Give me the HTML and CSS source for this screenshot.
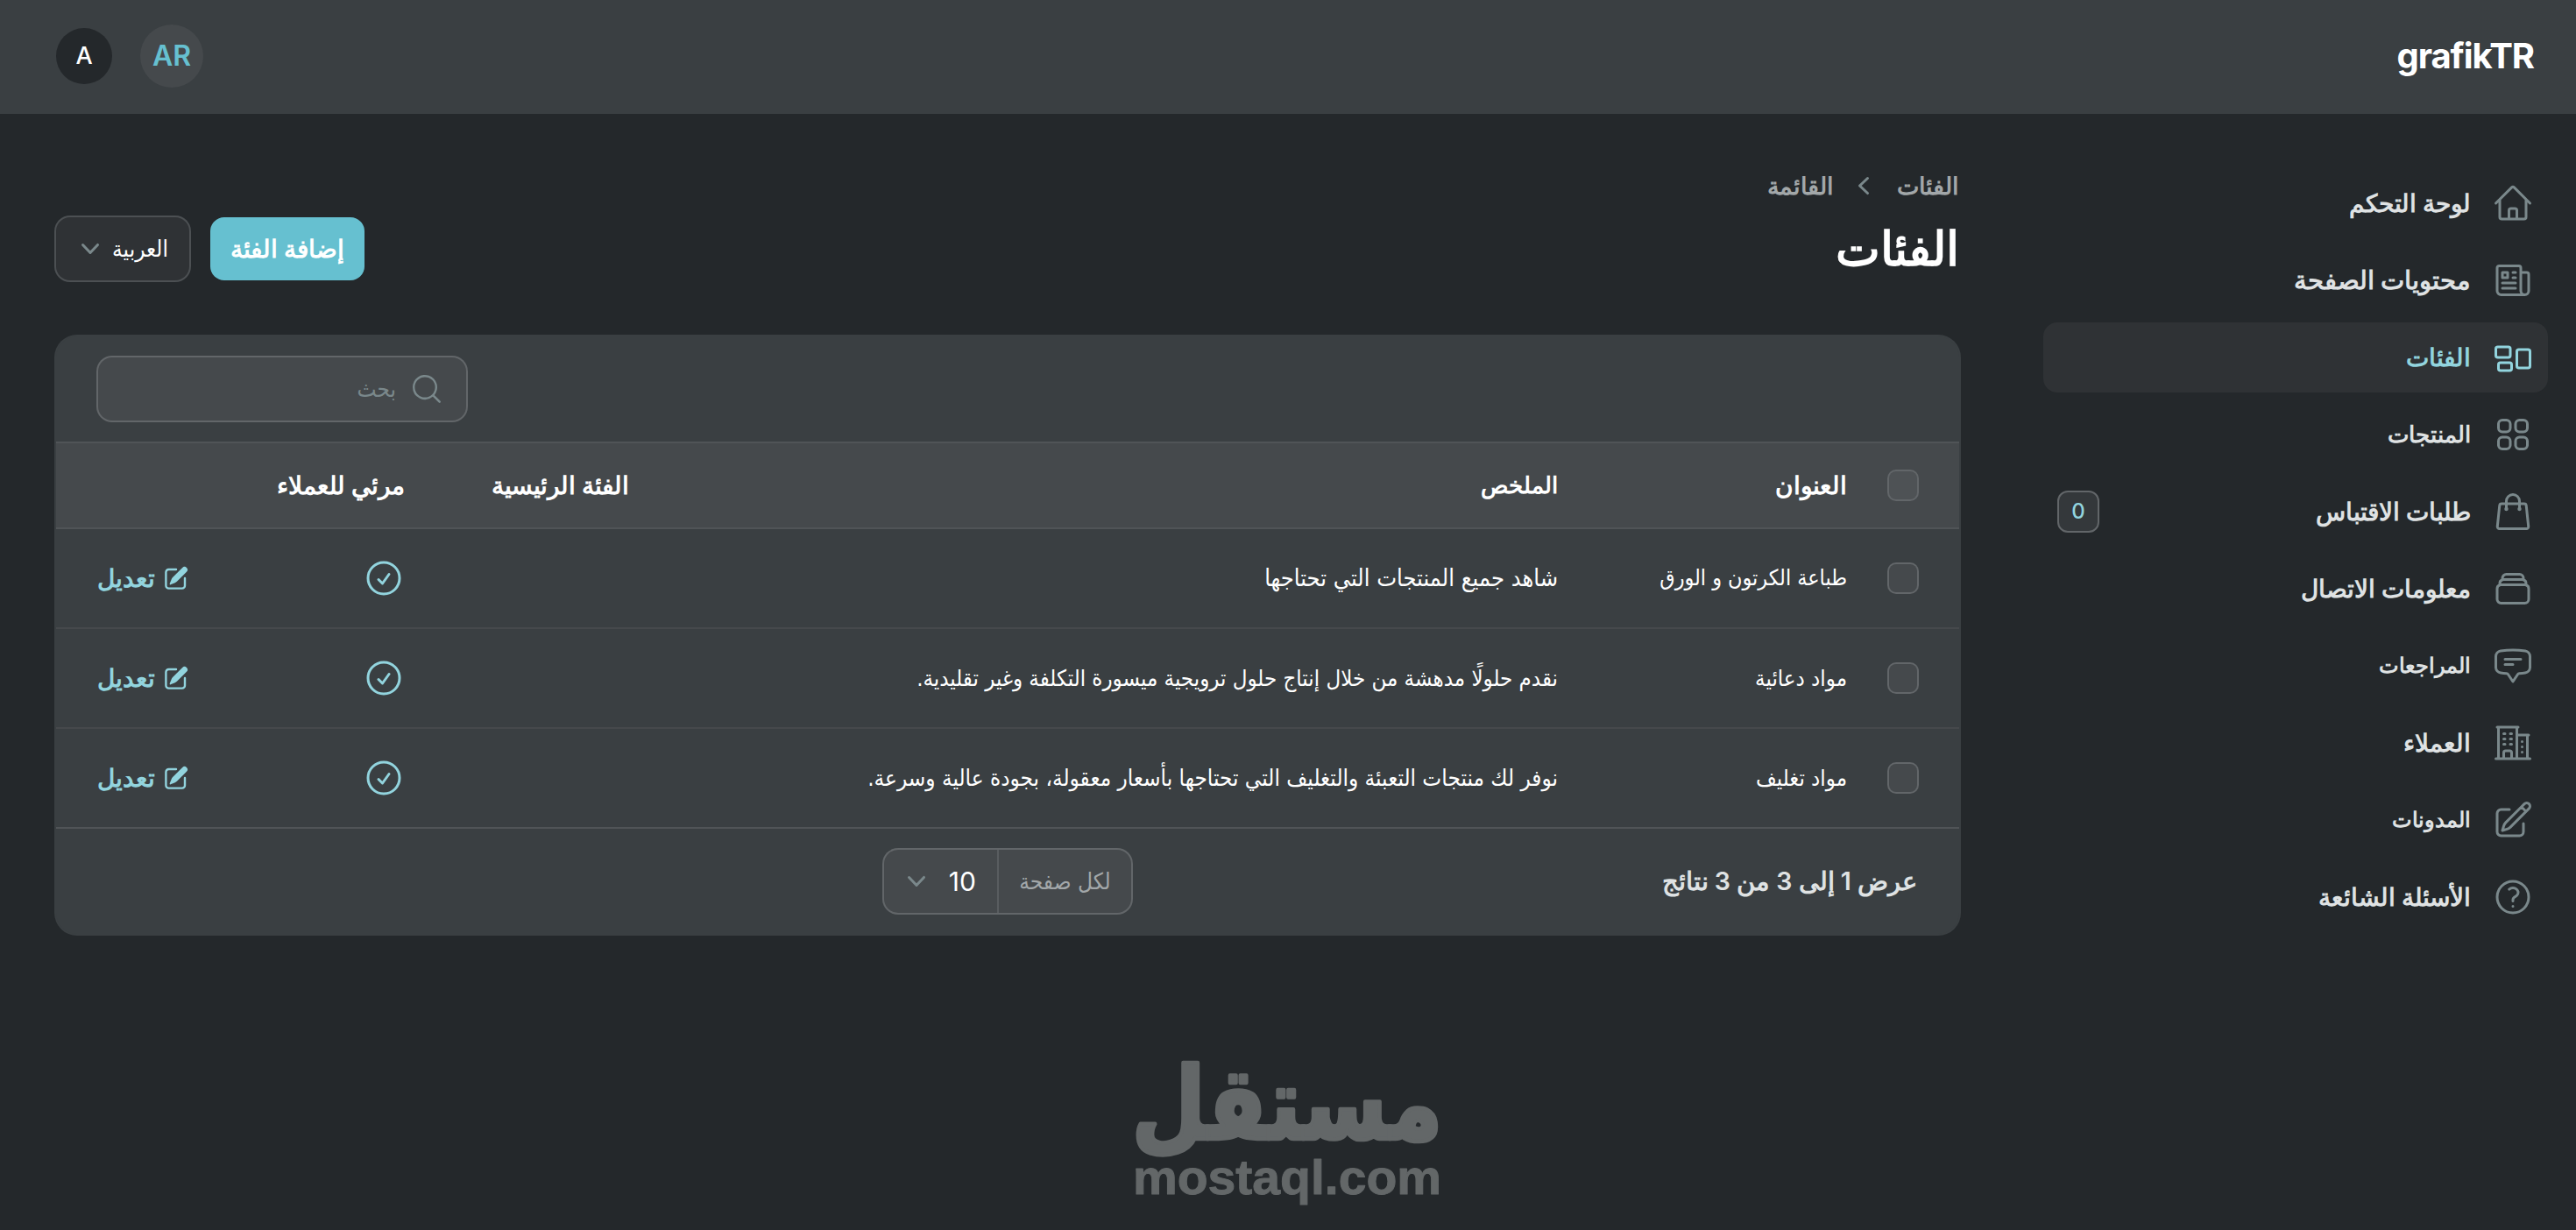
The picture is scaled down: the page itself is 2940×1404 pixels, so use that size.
FILE: index.html
```html
<!DOCTYPE html>
<html lang="ar" dir="rtl">
<head>
    <meta charset="utf-8">
    <title>الفئات - grafikTR</title>
    <link rel="stylesheet" href="styles.css">
</head>
<body>

    <!-- Icons used more than once -->
    <svg class="sprite" xmlns="http://www.w3.org/2000/svg">
        <symbol id="chevron-down" viewBox="0 0 20 20">
            <path fill="currentColor" fill-rule="evenodd" d="M5.23 7.21a.75.75 0 011.06.02L10 11.168l3.71-3.938a.75.75 0 111.08 1.04l-4.25 4.5a.75.75 0 01-1.08 0l-4.25-4.5a.75.75 0 01.02-1.06z"/>
        </symbol>
        <symbol id="check-circle" viewBox="0 0 24 24">
            <path fill="none" stroke="currentColor" stroke-width="1.5" stroke-linecap="round" stroke-linejoin="round" d="M9 12.75L11.25 15 15 9.75M21 12a9 9 0 11-18 0 9 9 0 0118 0z"/>
        </symbol>
        <symbol id="pencil" viewBox="0 0 20 20">
            <path fill="currentColor" d="M5.433 13.917l1.262-3.155A4 4 0 017.58 9.42l6.92-6.918a2.121 2.121 0 013 3l-6.92 6.918c-.383.383-.84.685-1.343.886l-3.154 1.262a.5.5 0 01-.65-.65z"/>
            <path fill="currentColor" d="M3.5 5.75c0-.69.56-1.25 1.25-1.25H10A.75.75 0 0010 3H4.75A2.75 2.75 0 002 5.75v9.5A2.75 2.75 0 004.75 18h9.5A2.75 2.75 0 0017 15.25V10a.75.75 0 00-1.5 0v5.25c0 .69-.56 1.25-1.25 1.25h-9.5c-.69 0-1.25-.56-1.25-1.25v-9.5z"/>
        </symbol>
    </svg>

    <header class="topbar">
        <div class="brand">grafikTR</div>
        <div class="topbar-end">
            <div class="locale">AR</div>
            <div class="avatar">A</div>
        </div>
    </header>

    <div class="layout">
        <nav class="sidebar">
            <a class="nav-item">
                <svg class="icon" viewBox="0 0 24 24"><path d="M2.25 12l8.954-8.955c.44-.439 1.152-.439 1.591 0L21.75 12M4.5 9.75v10.125c0 .621.504 1.125 1.125 1.125H9.75v-4.875c0-.621.504-1.125 1.125-1.125h2.25c.621 0 1.125.504 1.125 1.125V21h4.125c.621 0 1.125-.504 1.125-1.125V9.75M8.25 21h8.25"/></svg>
                <span>لوحة التحكم</span>
            </a>
            <a class="nav-item">
                <svg class="icon" viewBox="0 0 24 24"><path d="M12 7.5h1.5m-1.5 3h1.5m-7.5 3h7.5m-7.5 3h7.5m3-9h3.375c.621 0 1.125.504 1.125 1.125V18a2.25 2.25 0 01-2.25 2.25M16.5 7.5V18a2.25 2.25 0 002.25 2.25M16.5 7.5V4.875c0-.621-.504-1.125-1.125-1.125H4.125C3.504 3.75 3 4.254 3 4.875V18a2.25 2.25 0 002.25 2.25h13.5M6 7.5h3v3H6v-3z"/></svg>
                <span class="wide">محتويات الصفحة</span>
            </a>
            <a class="nav-item active">
                <svg class="icon" viewBox="0 0 24 24"><path d="M2.25 7.125C2.25 6.504 2.754 6 3.375 6h6c.621 0 1.125.504 1.125 1.125v3.75c0 .621-.504 1.125-1.125 1.125h-6a1.125 1.125 0 01-1.125-1.125v-3.75zM14.25 8.625c0-.621.504-1.125 1.125-1.125h5.25c.621 0 1.125.504 1.125 1.125v8.25c0 .621-.504 1.125-1.125 1.125h-5.25a1.125 1.125 0 01-1.125-1.125v-8.25zM3.75 16.125c0-.621.504-1.125 1.125-1.125h5.25c.621 0 1.125.504 1.125 1.125v2.25c0 .621-.504 1.125-1.125 1.125h-5.25a1.125 1.125 0 01-1.125-1.125v-2.25z"/></svg>
                <span>الفئات</span>
            </a>
            <a class="nav-item">
                <svg class="icon" viewBox="0 0 24 24"><path d="M3.75 6A2.25 2.25 0 016 3.75h2.25A2.25 2.25 0 0110.5 6v2.25a2.25 2.25 0 01-2.25 2.25H6a2.25 2.25 0 01-2.25-2.25V6zM3.75 15.75A2.25 2.25 0 016 13.5h2.25a2.25 2.25 0 012.25 2.25V18a2.25 2.25 0 01-2.25 2.25H6A2.25 2.25 0 013.75 18v-2.25zM13.5 6a2.25 2.25 0 012.25-2.25H18A2.25 2.25 0 0120.25 6v2.25A2.25 2.25 0 0118 10.5h-2.25a2.25 2.25 0 01-2.25-2.25V6zM13.5 15.75a2.25 2.25 0 012.25-2.25H18a2.25 2.25 0 012.25 2.25V18A2.25 2.25 0 0118 20.25h-2.25A2.25 2.25 0 0113.5 18v-2.25z"/></svg>
                <span class="snug">المنتجات</span>
            </a>
            <a class="nav-item">
                <svg class="icon" viewBox="0 0 24 24"><path d="M15.75 10.5V6a3.75 3.75 0 10-7.5 0v4.5m11.356-1.993l1.263 12c.07.665-.45 1.243-1.119 1.243H4.25a1.125 1.125 0 01-1.12-1.243l1.264-12A1.125 1.125 0 015.513 7.5h12.974c.576 0 1.059.435 1.119 1.007zM8.625 10.5a.375.375 0 11-.75 0 .375.375 0 01.75 0zm7.5 0a.375.375 0 11-.75 0 .375.375 0 01.75 0z"/></svg>
                <span>طلبات الاقتباس</span>
                <span class="badge">0</span>
            </a>
            <a class="nav-item">
                <svg class="icon" viewBox="0 0 24 24"><path d="M6 6.878V6a2.25 2.25 0 012.25-2.25h7.5A2.25 2.25 0 0118 6v.878m-12 0c.235-.083.487-.128.75-.128h10.5c.263 0 .515.045.75.128m-12 0A2.25 2.25 0 004.5 9v.878m13.5-3A2.25 2.25 0 0119.5 9v.878m0 0a2.246 2.246 0 00-.75-.128H5.25c-.263 0-.515.045-.75.128m15 0A2.25 2.25 0 0121 12v6a2.25 2.25 0 01-2.25 2.25H5.25A2.25 2.25 0 013 18v-6c0-.98.626-1.813 1.5-2.122"/></svg>
                <span>معلومات الاتصال</span>
            </a>
            <a class="nav-item">
                <svg class="icon" viewBox="0 0 24 24"><path d="M7.5 8.25h9m-9 3H12m-9.75 1.51c0 1.6 1.123 2.994 2.707 3.227 1.129.166 2.27.293 3.423.379.35.026.67.21.865.501L12 21l2.755-4.133a1.14 1.14 0 01.865-.501 48.172 48.172 0 003.423-.379c1.584-.233 2.707-1.626 2.707-3.228V6.741c0-1.602-1.123-2.995-2.707-3.228A48.394 48.394 0 0012 3c-2.392 0-4.744.175-7.043.513C3.373 3.746 2.25 5.14 2.25 6.741v6.018z"/></svg>
                <span class="tight">المراجعات</span>
            </a>
            <a class="nav-item">
                <svg class="icon" viewBox="0 0 24 24"><path d="M2.25 21h19.5m-18-18v18m10.5-18v18m6-13.5V21M6.75 6.75h.75m-.75 3h.75m-.75 3h.75m3-6h.75m-.75 3h.75m-.75 3h.75M6.75 21v-3.375c0-.621.504-1.125 1.125-1.125h2.25c.621 0 1.125.504 1.125 1.125V21M3 3h12m-.75 4.5H21m-3.75 3.75h.008v.008h-.008v-.008zm0 3h.008v.008h-.008v-.008zm0 3h.008v.008h-.008v-.008z"/></svg>
                <span>العملاء</span>
            </a>
            <a class="nav-item">
                <svg class="icon" viewBox="0 0 24 24"><path d="M16.862 4.487l1.687-1.688a1.875 1.875 0 112.652 2.652L10.582 16.07a4.5 4.5 0 01-1.897 1.13L6 18l.8-2.685a4.5 4.5 0 011.13-1.897l8.932-8.931zm0 0L19.5 7.125M18 14v4.75A2.25 2.25 0 0115.75 21H5.25A2.25 2.25 0 013 18.75V8.25A2.25 2.25 0 015.25 6H10"/></svg>
                <span class="tight">المدونات</span>
            </a>
            <a class="nav-item">
                <svg class="icon" viewBox="0 0 24 24"><path d="M9.879 7.519c1.171-1.025 3.071-1.025 4.242 0 1.172 1.025 1.172 2.687 0 3.712-.203.179-.43.326-.67.442-.745.361-1.45.999-1.45 1.827v.75M21 12a9 9 0 11-18 0 9 9 0 0118 0zm-9 5.25h.008v.008H12v-.008z"/></svg>
                <span>الأسئلة الشائعة</span>
            </a>
        </nav>

        <main class="content">
            <div class="page-header">
                <div>
                    <div class="breadcrumbs">
                        <span>الفئات</span>
                        <svg class="crumb-arrow" viewBox="0 0 20 20"><path fill="currentColor" fill-rule="evenodd" d="M12.79 5.23a.75.75 0 01-.02 1.06L8.832 10l3.938 3.71a.75.75 0 11-1.04 1.08l-4.5-4.25a.75.75 0 010-1.08l4.5-4.25a.75.75 0 011.06.02z"/></svg>
                        <span>القائمة</span>
                    </div>
                    <h1>الفئات</h1>
                </div>
                <div class="page-actions">
                    <button class="btn-primary">إضافة الفئة</button>
                    <div class="select">
                        <span>العربية</span>
                        <svg class="chevron"><use href="#chevron-down"/></svg>
                    </div>
                </div>
            </div>

            <section class="card">
                <div class="toolbar">
                    <div class="search">
                        <svg viewBox="0 0 20 20"><path fill="currentColor" fill-rule="evenodd" d="M9 3.2a5.8 5.8 0 100 11.6A5.8 5.8 0 009 3.2zM2 9a7 7 0 1112.4 4.45l3.4 3.4a.65.65 0 01-.92.92l-3.4-3.4A7 7 0 012 9z"/></svg>
                        <span>بحث</span>
                    </div>
                </div>

                <table>
                    <colgroup>
                        <col class="col-check">
                        <col class="col-title">
                        <col class="col-summary">
                        <col class="col-parent">
                        <col class="col-visible">
                        <col>
                    </colgroup>
                    <thead>
                        <tr>
                            <th><span class="checkbox"></span></th>
                            <th>العنوان</th>
                            <th class="snug">الملخص</th>
                            <th>الفئة الرئيسية</th>
                            <th>مرئي للعملاء</th>
                            <th></th>
                        </tr>
                    </thead>
                    <tbody>
                        <tr>
                            <td><span class="checkbox"></span></td>
                            <td class="title-long">طباعة الكرتون و الورق</td>
                            <td class="summary-short">شاهد جميع المنتجات التي تحتاجها</td>
                            <td></td>
                            <td><svg class="visible-icon"><use href="#check-circle"/></svg></td>
                            <td><a class="edit"><svg><use href="#pencil"/></svg>تعديل</a></td>
                        </tr>
                        <tr>
                            <td><span class="checkbox"></span></td>
                            <td>مواد دعائية</td>
                            <td>نقدم حلولًا مدهشة من خلال إنتاج حلول ترويجية ميسورة التكلفة وغير تقليدية.</td>
                            <td></td>
                            <td><svg class="visible-icon"><use href="#check-circle"/></svg></td>
                            <td><a class="edit"><svg><use href="#pencil"/></svg>تعديل</a></td>
                        </tr>
                        <tr>
                            <td><span class="checkbox"></span></td>
                            <td>مواد تغليف</td>
                            <td class="summary-long">نوفر لك منتجات التعبئة والتغليف التي تحتاجها بأسعار معقولة، بجودة عالية وسرعة.</td>
                            <td></td>
                            <td><svg class="visible-icon"><use href="#check-circle"/></svg></td>
                            <td><a class="edit"><svg><use href="#pencil"/></svg>تعديل</a></td>
                        </tr>
                    </tbody>
                </table>

                <div class="pagination">
                    <div class="results">عرض 1 إلى 3 من 3 نتائج</div>
                    <div class="per-page">
                        <span class="per-page-label">لكل صفحة</span>
                        <span class="per-page-value">10 <svg class="chevron"><use href="#chevron-down"/></svg></span>
                    </div>
                    <div></div>
                </div>
            </section>
        </main>
    </div>

    <svg class="watermark" viewBox="0 0 360 180">
        <text class="mark-ar" x="180" y="84" text-anchor="middle" transform="scale(1 1.18)">مستقل</text>
        <text class="mark-en" x="4" y="162" textLength="352" lengthAdjust="spacingAndGlyphs">mostaql.com</text>
    </svg>

</body>
</html>
```
FILE: styles.css
```css
* {
    box-sizing: border-box;
}

body {
    margin: 0;
    height: 1404px;
    overflow: hidden;
    position: relative;
    background-color: #24282b;
    color: #fff;
    font-family: Inter, sans-serif;
    font-size: 28px;
    line-height: 40px;
}

svg {
    display: block;
    flex-shrink: 0;
}

.sprite {
    position: absolute;
    width: 0;
    height: 0;
}

/* Top bar */
.topbar {
    display: flex;
    align-items: center;
    justify-content: space-between;
    height: 130px;
    padding: 0 48px 2px 64px;
    background-color: #3a3f42;
}

.brand {
    font-size: 40px;
    font-weight: 700;
    letter-spacing: -1.1px;
    direction: ltr;
}

.topbar-end {
    display: flex;
    align-items: center;
    gap: 32px;
}

.locale,
.avatar {
    display: flex;
    align-items: center;
    justify-content: center;
    border-radius: 50%;
}

.locale {
    width: 72px;
    height: 72px;
    background-color: #45494c;
    color: #66c0d0;
    font-size: 32px;
    font-weight: 600;
}

.avatar {
    width: 64px;
    height: 64px;
    background-color: #24282b;
    font-size: 27px;
    font-weight: 500;
}

/* Sidebar */
.layout {
    display: flex;
}

.sidebar {
    width: 640px;
    padding: 62px 32px 0;
    display: flex;
    flex-direction: column;
    gap: 8px;
}

.nav-item {
    display: flex;
    align-items: center;
    gap: 24px;
    height: 80px;
    padding: 0 16px;
    border-radius: 16px;
    color: #dfe2e3;
    font-weight: 600;
}

.nav-item .icon {
    width: 48px;
    height: 48px;
    fill: none;
    stroke: #7a888b;
    stroke-width: 1.5;
    stroke-linecap: round;
    stroke-linejoin: round;
}

.nav-item.active {
    background-color: #2f3235;
    color: #92d4de;
}

.nav-item.active .icon {
    stroke: #92d4de;
}

.wide {
    font-size: 29px;
}

.snug {
    font-size: 26px;
}

.tight {
    font-size: 24px;
}

.badge {
    width: 48px;
    height: 48px;
    margin-right: auto;
    border: 2px solid #626669;
    border-radius: 12px;
    background-color: #34383b;
    color: #92d4de;
    font-size: 24px;
    font-weight: 500;
    line-height: 44px;
    text-align: center;
}

/* Page header */
.content {
    flex: 1;
    padding: 62px 64px 0;
}

.page-header {
    display: flex;
    align-items: center;
    justify-content: space-between;
    height: 128px;
}

.breadcrumbs {
    display: flex;
    align-items: center;
    gap: 18px;
    color: #a2a7a9;
    font-size: 26.5px;
    font-weight: 600;
}

.crumb-arrow {
    width: 40px;
    height: 40px;
    margin-left: -4px;
    color: #7a888b;
}

h1 {
    margin: 16px 0 0;
    font-size: 54px;
    font-weight: 700;
    line-height: 72px;
}

.page-actions {
    display: flex;
    gap: 24px;
    margin-top: 56px;
}

.btn-primary {
    width: 176px;
    height: 72px;
    padding: 0;
    border: none;
    border-radius: 16px;
    background-color: #66c0d0;
    color: #fff;
    font: 600 28px Inter, sans-serif;
}

.select {
    display: flex;
    align-items: center;
    justify-content: space-between;
    width: 152px;
    height: 72px;
    padding: 0 24px 0 19px;
    border-radius: 16px;
    background-color: #2f3235;
    box-shadow: 0 0 0 2px #4c5053;
    font-family: "DejaVu Sans Condensed", sans-serif;
    font-size: 26px;
}

.chevron {
    width: 40px;
    height: 40px;
    color: #7a888b;
}

/* Table card */
.card {
    margin-top: 64px;
    border-radius: 24px;
    background-color: #3a3f42;
    box-shadow: 0 0 0 2px #3a3f42;
}

.toolbar {
    display: flex;
    justify-content: flex-end;
    padding: 24px 48px;
}

.search {
    display: flex;
    align-items: center;
    gap: 15px;
    width: 420px;
    height: 72px;
    padding: 0 25px;
    border-radius: 16px;
    background-color: #45494c;
    box-shadow: 0 0 0 2px #626669;
    color: #7a888b;
    font-family: "DejaVu Sans Condensed", sans-serif;
    font-size: 26px;
}

.search svg {
    width: 40px;
    height: 40px;
}

table {
    width: 100%;
    table-layout: fixed;
    border-collapse: separate;
    border-spacing: 0;
}

.col-check { width: 104px; }
.col-title { width: 330px; }
.col-summary { width: 1060px; }
.col-parent { width: 256px; }
.col-visible { width: 200px; }

th,
td {
    padding: 0 24px;
    text-align: right;
    white-space: nowrap;
}

th {
    height: 100px;
    background-color: #45494c;
    border-top: 2px solid #505457;
    border-bottom: 2px solid #505457;
    font-weight: 600;
}

td {
    height: 114px;
    border-bottom: 2px solid #46494c;
    font-family: "DejaVu Sans Condensed", sans-serif;
    font-size: 25.6px;
}

tbody tr:last-child td {
    border-bottom-color: #505457;
}

th:first-child,
td:first-child {
    padding-right: 48px;
}

.title-long {
    font-size: 24.9px;
}

.summary-short {
    font-size: 27px;
}

.summary-long {
    font-size: 25.9px;
}

.checkbox {
    display: block;
    width: 32px;
    height: 32px;
    border-radius: 8px;
    background-color: #45494c;
    box-shadow: 0 0 0 2px #626669;
}

th .checkbox {
    background-color: #4e5255;
}

.visible-icon {
    width: 48px;
    height: 48px;
    color: #92d4de;
}

.edit {
    display: flex;
    align-items: center;
    justify-content: flex-end;
    gap: 8px;
    padding-left: 23px;
    color: #92d4de;
    font-family: Inter, sans-serif;
    font-size: 28px;
    font-weight: 600;
}

.edit svg {
    width: 32px;
    height: 32px;
}

/* Pagination */
.pagination {
    display: grid;
    grid-template-columns: 1fr auto 1fr;
    align-items: center;
    height: 120px;
    padding: 0 48px;
}

.results {
    color: #dfe2e3;
    font-size: 28.5px;
    font-weight: 600;
}

.per-page {
    display: flex;
    height: 72px;
    border-radius: 16px;
    background-color: #45494c;
    box-shadow: 0 0 0 2px #626669;
}

.per-page-label {
    width: 153px;
    border-left: 2px solid #595d60;
    color: #a2a7a9;
    font-family: "DejaVu Sans Condensed", sans-serif;
    font-size: 26px;
    line-height: 72px;
    text-align: center;
}

.per-page-value {
    display: flex;
    align-items: center;
    justify-content: space-between;
    width: 129px;
    padding: 0 24px 0 17px;
    font-size: 30px;
}

/* Watermark over the page */
.watermark {
    position: absolute;
    left: 1289px;
    top: 1201px;
    width: 360px;
    height: 180px;
    direction: ltr;
    fill: #636768;
    stroke: #636768;
    stroke-linejoin: round;
}

.mark-ar {
    font: 700 97px "DejaVu Sans", sans-serif;
    stroke-width: 4px;
}

.mark-en {
    font: 700 56px "Liberation Sans", sans-serif;
    stroke-width: 1px;
}
```
